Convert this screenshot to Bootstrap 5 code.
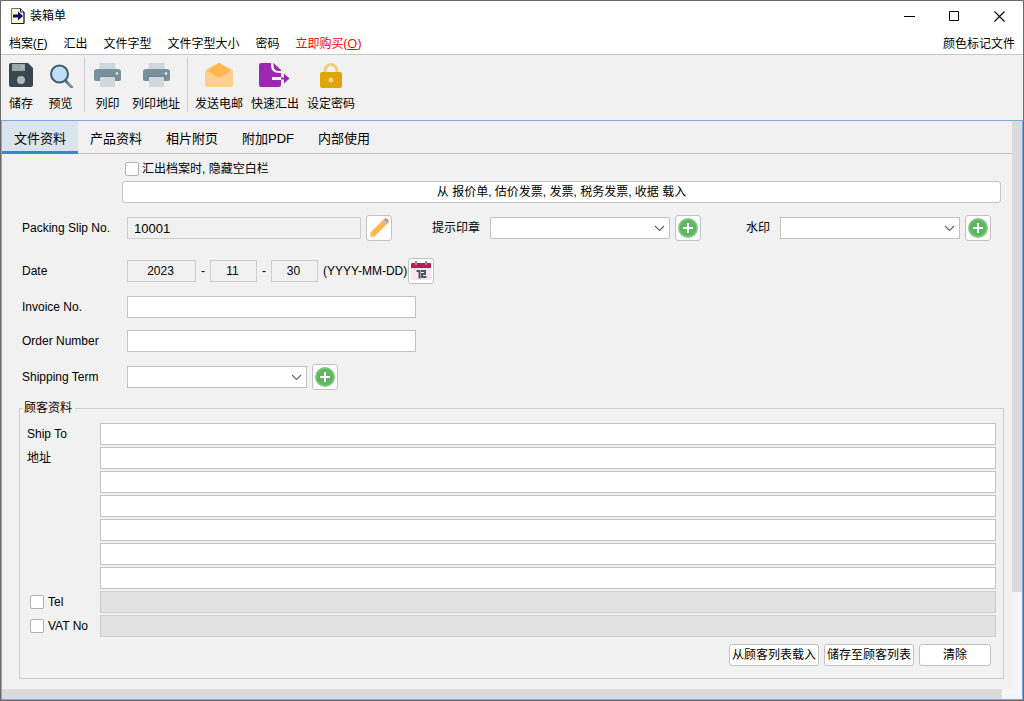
<!DOCTYPE html>
<html lang="zh-CN">
<head>
<meta charset="utf-8">
<meta name="viewport" content="width=device-width, initial-scale=1">
<title>装箱单</title>
<link href="https://cdn.jsdelivr.net/npm/bootstrap@5.3.0/dist/css/bootstrap.min.css" rel="stylesheet">
<script src="https://cdn.jsdelivr.net/npm/bootstrap@5.3.0/dist/js/bootstrap.bundle.min.js" defer></script>
<style>
  body { font: 12px/16px "Liberation Sans", "Noto Sans CJK SC", sans-serif; color: #000; background: #f1f1f1; }
  .app-window { min-height: 100vh; border: 1px solid #6a6a6a; }
  .title-bar { height: 30px; padding: 0 1px 0 10px; gap: 5px; }
  .win-btn { width: 45px; height: 28px; padding: 0; border: 0; background: none; display: grid; place-items: center; }
  .menu-bar { height: 24px; padding: 2px 8px 0; border-bottom: 1px solid #c8c8c8; }
  .menu-bar a { color: #000; text-decoration: none; white-space: nowrap; }
  .menu-bar .key { font-family: "Open Sans", sans-serif; }
  .menu-bar .key { font-size: 13px; }
  .menu-bar .buy { color: #f00; }
  .tool-bar { height: 65px; padding: 2px 0 6px 3px; }
  .tool-btn { border: 0; background: none; padding: 6px 4px 0; display: flex; flex-direction: column; align-items: center; gap: 7px; line-height: 18px; color: #000; white-space: nowrap; }
  .tool-btn svg { display: block; }
  .tool-group { display: flex; padding: 0 3px; }
  .tool-group.file-tools { gap: 5px; padding: 0 6px 0 0; }
  .tool-group.print-tools { gap: 3px; padding-left: 5px; }
  .tool-sep { width: 1px; background: #cdcdcd; margin-bottom: 2px; }
  .work-area { border: 1px solid #7da9dc; display: grid; grid-template-columns: minmax(0, 1fr) 10px; grid-template-rows: 1fr 10px; }
  .page-tabs { border-bottom: 1px solid #bfbfbf; height: 33px; flex-wrap: nowrap; }
  .page-tabs .nav-link { border: 0; border-radius: 0; margin: 0; height: 33px; padding: 8px 12px 0; font-size: 13px; line-height: 20px; color: #000; white-space: nowrap; }
  .page-tabs .nav-link.active { background: #dae4ed; color: #000; border-bottom: 3px solid #4083c9; }
  .v-track, .h-track { background: #f5f5f5; }
  .v-thumb { height: 83%; background: #dbdbdb; }
  .h-thumb { width: 99%; height: 100%; background: #dbdbdb; }
  .form-page { padding: 7px 8px 10px 17px; }
  .form-page .form-control, .form-page .form-select { height: 22px; min-height: 22px; padding: 0 6px; border: 1px solid #c2c2c2; border-radius: 0; font-size: 13px; line-height: 20px; color: #000; background-color: #fff; }
  .form-page .form-control:read-only { background-color: #f0f0f0; border-color: #cdcdcd; }
  .form-page .form-control:disabled { background-color: #e2e2e2; border-color: #cdcdcd; }
  .form-page .form-select { width: 180px; flex: none; background-image: url("data:image/svg+xml,%3Csvg xmlns='http://www.w3.org/2000/svg' viewBox='0 0 11 7'%3E%3Cpath d='M1 1l4.500 4.500L10 1' fill='none' stroke='%23666' stroke-width='1.200'/%3E%3C/svg%3E"); background-size: 11px 7px; background-position: right 4px center; }
  .form-page .form-check-input { width: 14px; height: 14px; margin: 0; float: none; border: 1px solid #b0b0b0; border-radius: 2px; flex: none; }
  .push-btn { height: 22px; padding: 1px 0 0; border: 1px solid #c2c2c2; border-radius: 3px; background: #fff; color: #000; line-height: 19px; white-space: nowrap; }
  .icon-btn { width: 26px; height: 26px; padding: 0; border: 1px solid #c2c2c2; border-radius: 3px; background: #fff; display: grid; place-items: center; flex: none; margin-left: 5px; }
  .load-area { display: grid; row-gap: 4px; padding: 0 3px 12px 103px; }
  .hide-blank { display: flex; align-items: center; gap: 3px; padding-left: 3px; }
  .field-row { display: flex; align-items: center; padding-left: 3px; margin-bottom: 12px; }
  .field-row.slip-row { margin-bottom: 17px; padding-right: 13px; }
  .field-name { width: 105px; flex: none; }
  .stamp-group { display: flex; align-items: center; margin-left: 40px; }
  .stamp-group label { margin-right: 10px; white-space: nowrap; }
  .form-page .w-slip { width: 234px; }
  .form-page .w-line { width: 289px; }
  .form-page .w-year { width: 69px; text-align: center; font-size: 12px; }
  .form-page .w-part { width: 47px; text-align: center; font-size: 12px; }
  .form-page .w-year, .form-page .w-part { padding: 0 4px 0 2px; }
  .date-dash { width: 14px; text-align: center; }
  .date-format { width: 85px; padding-left: 5px; white-space: nowrap; }
  .customer { border: 1px solid #cdcdcd; padding: 7px 7px 12px; margin-top: -2px; }
  .customer legend { float: none; width: auto; margin: 0 0 0 -4px; padding: 0 3px 0 1px; font-size: 12px; line-height: 16px; }
  .customer-grid { display: grid; grid-template-columns: 73px minmax(0, 1fr); row-gap: 2px; align-items: center; }
  .customer-grid .only-line { grid-column: 2; }
  .opt-field { display: flex; align-items: center; gap: 4px; padding-left: 3px; }
  .customer-actions { display: flex; justify-content: flex-end; gap: 5px; padding: 7px 5px 0 0; }
  .customer-actions .push-btn { min-width: 72px; }
  .customer-actions .wide { min-width: 90px; }
</style>
</head>
<body>
<svg width="0" height="0" class="position-absolute" aria-hidden="true">
  <symbol id="plus" viewBox="0 0 20 20"><circle cx="10" cy="10" r="10" fill="#81c784"/><circle cx="10" cy="10" r="8.300" fill="#5db761"/><path d="M10 5v10M5 10h10" stroke="#fff" stroke-width="2"/></symbol>
  <symbol id="printer" viewBox="0 0 27 25"><path d="M5.500 0h16v7h-16z" fill="#cfd8dc"/><path d="M3 6h21q3 0 3 3v7q0 2-2 2H2q-2 0-2-2V9q0-3 3-3z" fill="#78909c"/><path d="M5 13h17v3H5z" fill="#6b8592"/><path d="M6 14h15v10H6z" fill="#cfd8dc"/><circle cx="23" cy="10.500" r="1.300" fill="#e8f0f4"/></symbol>
</svg>
<div class="app-window d-flex flex-column">
  <header class="bg-white">
    <div class="title-bar d-flex align-items-center">
      <svg width="14" height="16" viewBox="0 0 14 16" aria-hidden="true"><path d="M.5.500h9l3.500 3.500v11.500H.5z" fill="#ffffc8" stroke="#6a6a90"/><path d="M9.500.500V4H13M.5 15.500H13V4" fill="none" stroke="#15154c"/><path d="M2 6.500h5V3.500l5 4.500-5 4.500v-3H2z" fill="#080870"/></svg>
      <span>装箱单</span>
      <div class="d-flex ms-auto">
        <button type="button" class="win-btn" aria-label="最小化"><svg width="11" height="11"><path d="M0 5.500h11" stroke="#000"/></svg></button>
        <button type="button" class="win-btn" aria-label="最大化"><svg width="11" height="11"><path d="M.5.500h9v9h-9z" fill="none" stroke="#000"/></svg></button>
        <button type="button" class="win-btn" aria-label="关闭"><svg width="11" height="11"><path d="M.5.500l10 10M10.500.500l-10 10" stroke="#000" stroke-width="1.100"/></svg></button>
      </div>
    </div>
    <nav class="menu-bar d-flex align-items-center gap-3">
      <a href="#">档案<span class="key">(<u>F</u>)</span></a>
      <a href="#">汇出</a>
      <a href="#">文件字型</a>
      <a href="#">文件字型大小</a>
      <a href="#">密码</a>
      <a href="#" class="buy">立即购买<span class="key">(<u>O</u>)</span></a>
      <a href="#" class="ms-auto">颜色标记文件</a>
    </nav>
  </header>

  <div class="tool-bar d-flex">
    <div class="tool-group file-tools">
      <button type="button" class="tool-btn">
        <svg width="26" height="25" viewBox="0 0 26 25"><path d="M3 0h17l5 5v17q0 2-2 2H3q-2 0-2-2V2q0-2 2-2z" fill="#37474f"/><path d="M4 1h13v7H4z" fill="#9fa6aa"/><path d="M13 2h3v4h-3z" fill="#aeb5b8"/><circle cx="13" cy="17" r="4" fill="#b0b6b9"/></svg>
        储存</button>
      <button type="button" class="tool-btn">
        <svg width="27" height="25" viewBox="0 0 27 25"><path d="M19 18.500l6.500 6.500" stroke="#78909c" stroke-width="3"/><path d="M18 17l3 3" stroke="#546e7a" stroke-width="2"/><circle cx="12.500" cy="11" r="8.500" fill="#bbdefb" stroke="#455a64" stroke-width="2"/></svg>
        预览</button>
    </div>
    <div class="tool-sep"></div>
    <div class="tool-group print-tools">
      <button type="button" class="tool-btn"><svg width="27" height="25"><use href="#printer"/></svg>列印</button>
      <button type="button" class="tool-btn"><svg width="27" height="25"><use href="#printer"/></svg>列印地址</button>
    </div>
    <div class="tool-sep"></div>
    <div class="tool-group">
      <button type="button" class="tool-btn">
        <svg width="28" height="25" viewBox="0 0 28 25"><path d="M0 9q0-2 2-3L14-.5 26 6q2 1 2 3v13q0 2-2 2H2q-2 0-2-2z" fill="#ffd08c"/><path d="M14 0l12 7.500L14 15 2 7.500z" fill="#ffb74d"/></svg>
        发送电邮</button>
      <button type="button" class="tool-btn">
        <svg width="33" height="25" viewBox="0 0 33 25"><path d="M2 0h10v2q0 8 8 8h2v4h-9v3h9v5q0 2-2 2H2q-2 0-2-2V2q0-2 2-2z" fill="#9c27b0"/><path d="M14.500 0l7.500 7v1h-2q-5.500 0-5.500-6zM22 14.500h3v-4l5.500 5-5.500 5v-4h-3z" fill="#9c27b0"/></svg>
        快速汇出</button>
      <button type="button" class="tool-btn">
        <svg width="24" height="25" viewBox="0 0 24 25"><path d="M6 11V8a6 6.500 0 0 1 12 0v3" fill="none" stroke="#f0d080" stroke-width="3"/><rect x="1" y="9" width="22" height="16" rx="2" fill="#e0a40b"/><circle cx="12" cy="17" r="2.500" fill="#f3d584"/></svg>
        设定密码</button>
    </div>
  </div>

  <main class="work-area flex-grow-1">
    <div>
      <ul class="nav nav-tabs page-tabs">
        <li class="nav-item"><a class="nav-link active" href="#" aria-current="page">文件资料</a></li>
        <li class="nav-item"><a class="nav-link" href="#">产品资料</a></li>
        <li class="nav-item"><a class="nav-link" href="#">相片附页</a></li>
        <li class="nav-item"><a class="nav-link" href="#">附加PDF</a></li>
        <li class="nav-item"><a class="nav-link" href="#">内部使用</a></li>
      </ul>
      <form class="form-page">
        <div class="load-area">
          <div class="hide-blank">
            <input class="form-check-input" type="checkbox" id="hideBlank">
            <label for="hideBlank">汇出档案时, 隐藏空白栏</label>
          </div>
          <button type="button" class="push-btn">从 报价单, 估价发票, 发票, 税务发票, 收据 载入</button>
        </div>

        <div class="field-row slip-row">
          <label class="field-name" for="slipNo">Packing Slip No.</label>
          <input class="form-control w-slip" id="slipNo" value="10001" readonly>
          <button type="button" class="icon-btn" aria-label="编辑"><svg width="20" height="20" viewBox="0 0 20 20"><path d="M1.500 14.500L13.500 2.500l4 4L5.500 18.500l-4.500.5z" fill="#ffb74d"/><path d="M1.500 15l3.500 3.500-4 .5z" fill="#ffd08c"/><path d="M13.500 2.500l1.500-1.500 4 4-1.500 1.500z" fill="#b0bec5"/><path d="M15 1q1.500-1.500 3.500.5T19 5z" fill="#e57373"/></svg></button>
          <div class="stamp-group">
            <label for="stamp">提示印章</label>
            <select class="form-select" id="stamp"></select>
            <button type="button" class="icon-btn" aria-label="新增提示印章"><svg width="20" height="20"><use href="#plus"/></svg></button>
          </div>
          <div class="stamp-group ms-auto">
            <label for="watermark">水印</label>
            <select class="form-select" id="watermark"></select>
            <button type="button" class="icon-btn" aria-label="新增水印"><svg width="20" height="20"><use href="#plus"/></svg></button>
          </div>
        </div>

        <div class="field-row">
          <label class="field-name" for="year">Date</label>
          <input class="form-control w-year" id="year" value="2023" readonly>
          <span class="date-dash">-</span>
          <input class="form-control w-part" value="11" aria-label="月" readonly>
          <span class="date-dash">-</span>
          <input class="form-control w-part" value="30" aria-label="日" readonly>
          <span class="date-format">(YYYY-MM-DD)</span>
          <button type="button" class="icon-btn" aria-label="选择日期"><svg width="20" height="20" viewBox="0 0 20 20"><path d="M0 6h20v13H0z" fill="#f8e4ec"/><path d="M1 2h18q1 0 1 1v4H0V3q0-1 1-1z" fill="#c2185b"/><path d="M4 0h2v4H4zM14 0h2v4h-2z" fill="#9c8a84"/><path d="M5.500 10h3v7.500M10 10h4v3h-3v3h4.500" fill="none" stroke="#455a64" stroke-width="2"/></svg></button>
        </div>
        <div class="field-row">
          <label class="field-name" for="invoiceNo">Invoice No.</label>
          <input class="form-control w-line" id="invoiceNo">
        </div>
        <div class="field-row">
          <label class="field-name" for="orderNo">Order Number</label>
          <input class="form-control w-line" id="orderNo">
        </div>
        <div class="field-row">
          <label class="field-name" for="term">Shipping Term</label>
          <select class="form-select" id="term"></select>
          <button type="button" class="icon-btn" aria-label="新增运送条款"><svg width="20" height="20"><use href="#plus"/></svg></button>
        </div>

        <fieldset class="customer">
          <legend>顾客资料</legend>
          <div class="customer-grid">
            <label for="shipTo">Ship To</label>
            <input class="form-control" id="shipTo">
            <label for="address1">地址</label>
            <input class="form-control" id="address1">
            <input class="form-control only-line" aria-label="地址 2">
            <input class="form-control only-line" aria-label="地址 3">
            <input class="form-control only-line" aria-label="地址 4">
            <input class="form-control only-line" aria-label="地址 5">
            <input class="form-control only-line" aria-label="地址 6">
            <div class="opt-field">
              <input class="form-check-input" type="checkbox" id="useTel">
              <label for="useTel">Tel</label>
            </div>
            <input class="form-control" aria-label="Tel" disabled>
            <div class="opt-field">
              <input class="form-check-input" type="checkbox" id="useVat">
              <label for="useVat">VAT No</label>
            </div>
            <input class="form-control" aria-label="VAT No" disabled>
          </div>
          <div class="customer-actions">
            <button type="button" class="push-btn wide">从顾客列表载入</button>
            <button type="button" class="push-btn wide">储存至顾客列表</button>
            <button type="button" class="push-btn">清除</button>
          </div>
        </fieldset>
      </form>
    </div>
    <div class="v-track"><div class="v-thumb"></div></div>
    <div class="h-track"><div class="h-thumb"></div></div>
    <div class="v-track"></div>
  </main>
</div>
</body>
</html>
